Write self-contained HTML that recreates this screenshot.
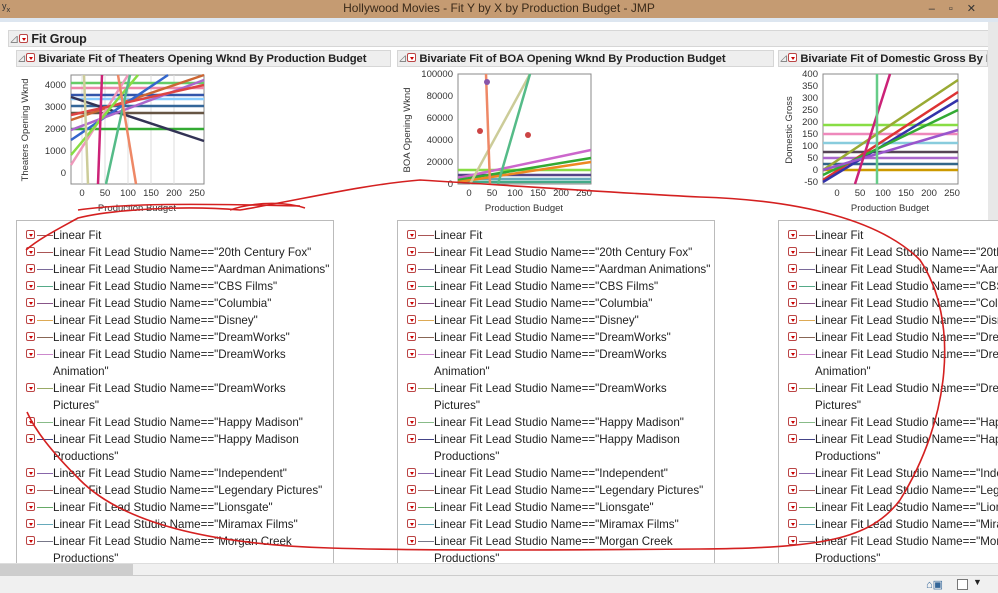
<!DOCTYPE html>
<html><head><meta charset="utf-8"><style>
*{margin:0;padding:0;box-sizing:border-box}
body{width:998px;height:593px;overflow:hidden;background:#fff;font-family:"Liberation Sans",sans-serif;position:relative;color:#222}
.abs{position:absolute}
.title{left:0;top:0;width:998px;height:18px;background:#c59b72;font-size:12px;color:#3a2a1a;text-align:center;line-height:17px}
.hdr{background:#eeeeee;border:1px solid #d6d6d6;font-weight:bold;font-size:11.3px;line-height:16px;white-space:nowrap;overflow:hidden;letter-spacing:-0.1px}
.tri{display:inline-block;width:9px;height:9px;border:1px solid #b44;border-radius:2px;background:#fff;position:relative;vertical-align:0px;margin-right:3px}
.tri:after{content:"";position:absolute;left:1.5px;top:2.5px;border-left:2.5px solid transparent;border-right:2.5px solid transparent;border-top:3px solid #c00}
.box{border:1px solid #bbb;background:#fff;overflow:hidden}
.list{position:absolute;left:0;top:6px;font-size:11.6px;line-height:17px;white-space:nowrap}
.it{position:relative;padding-left:36px}
.it .tri{position:absolute;left:9px;top:3px}
.it i{position:absolute;left:20px;top:8px;width:16px;height:1px;background:#7a6a9a}
</style></head><body>
<div class="abs title">Hollywood Movies - Fit Y by X by Production Budget - JMP</div>
<div class="abs" style="left:2px;top:1px;font-size:9px;color:#333">y<sub>x</sub></div>
<div class="abs" style="right:8px;top:2px;font-size:11px;color:#333;letter-spacing:14px">–▫✕</div>
<div class="abs" style="left:0;top:18px;width:998px;height:4px;background:#dde6f0"></div>
<div class="abs hdr" style="left:8px;top:30px;width:985px;height:17px;font-size:12.5px"><span style="color:#888;font-weight:normal">⊿</span><span class="tri"></span>Fit Group</div>
<div class="abs hdr" style="left:16px;top:50px;width:375px;height:17px"><span style="color:#888;font-weight:normal">⊿</span><span class="tri"></span>Bivariate Fit of Theaters Opening Wknd By Production Budget</div>
<div class="abs hdr" style="left:397px;top:50px;width:377px;height:17px"><span style="color:#888;font-weight:normal">⊿</span><span class="tri"></span>Bivariate Fit of BOA Opening Wknd By Production Budget</div>
<div class="abs hdr" style="left:778px;top:50px;width:210px;height:17px"><span style="color:#888;font-weight:normal">⊿</span><span class="tri"></span>Bivariate Fit of Domestic Gross By Production Budget</div>
<div class="abs" style="left:988px;top:22px;width:10px;height:553px;background:#e8e8e8"></div>

<svg class="abs" style="left:18px;top:70px" width="200" height="145">
<text x="10" y="60" transform="rotate(-90 10 60)" text-anchor="middle" font-size="9.5" fill="#333" font-family="Liberation Sans">Theaters Opening Wknd</text>
<g font-size="9.5" fill="#333" font-family="Liberation Sans" text-anchor="end"><text x="48" y="18">4000</text><text x="48" y="40">3000</text><text x="48" y="62">2000</text><text x="48" y="84">1000</text><text x="48" y="106">0</text></g>
<rect x="53" y="5" width="133" height="109" fill="#fff" stroke="#888"/>
<g stroke="#ddd"><line x1="64" y1="5" x2="64" y2="114"/><line x1="87" y1="5" x2="87" y2="114"/><line x1="110" y1="5" x2="110" y2="114"/><line x1="133" y1="5" x2="133" y2="114"/><line x1="156" y1="5" x2="156" y2="114"/></g>
<g stroke-width="2.5" fill="none">
<line x1="53" y1="13" x2="186" y2="13" stroke="#6c6"/><line x1="53" y1="18" x2="186" y2="18" stroke="#e8a"/>
<line x1="53" y1="25" x2="186" y2="25" stroke="#35a"/><line x1="53" y1="29" x2="186" y2="29" stroke="#8cf"/>
<line x1="53" y1="36" x2="186" y2="36" stroke="#369"/><line x1="53" y1="43" x2="186" y2="43" stroke="#654"/>
<line x1="53" y1="59" x2="186" y2="59" stroke="#3a3"/>
<line x1="53" y1="27" x2="186" y2="71" stroke="#335"/>
<line x1="53" y1="50" x2="186" y2="5" stroke="#c63"/><line x1="53" y1="70" x2="150" y2="5" stroke="#36c"/>
<line x1="53" y1="60" x2="186" y2="10" stroke="#a6c"/><line x1="53" y1="95" x2="110" y2="5" stroke="#e9b"/>
<line x1="53" y1="45" x2="186" y2="15" stroke="#d44"/><line x1="53" y1="85" x2="120" y2="5" stroke="#8d4"/>
<line x1="80" y1="114" x2="84" y2="5" stroke="#c27"/><line x1="88" y1="114" x2="112" y2="5" stroke="#5b8"/>
<line x1="100" y1="5" x2="118" y2="114" stroke="#e86"/><line x1="70" y1="114" x2="66" y2="5" stroke="#cc9"/>
</g>
<g font-size="9.5" fill="#333" font-family="Liberation Sans" text-anchor="middle"><text x="64" y="126">0</text><text x="87" y="126">50</text><text x="110" y="126">100</text><text x="133" y="126">150</text><text x="156" y="126">200</text><text x="179" y="126">250</text><text x="119" y="141">Production Budget</text></g>
</svg>
<svg class="abs" style="left:400px;top:70px" width="200" height="145">
<text x="10" y="60" transform="rotate(-90 10 60)" text-anchor="middle" font-size="9.5" fill="#333" font-family="Liberation Sans">BOA Opening Wknd</text>
<g font-size="9.5" fill="#333" font-family="Liberation Sans" text-anchor="end"><text x="53" y="7">100000</text><text x="53" y="29">80000</text><text x="53" y="51">60000</text><text x="53" y="73">40000</text><text x="53" y="95">20000</text><text x="53" y="117">0</text></g>
<rect x="58" y="4" width="133" height="110" fill="#fff" stroke="#888"/>
<g stroke-width="2.5" fill="none">
<line x1="58" y1="100" x2="191" y2="100" stroke="#8d4"/><line x1="58" y1="105" x2="191" y2="105" stroke="#548"/>
<line x1="58" y1="109" x2="191" y2="109" stroke="#6ab"/><line x1="58" y1="112" x2="191" y2="112" stroke="#4a8"/>
<line x1="58" y1="108" x2="191" y2="80" stroke="#c6c"/><line x1="58" y1="110" x2="191" y2="88" stroke="#3a3"/>
<line x1="58" y1="112" x2="191" y2="92" stroke="#e82"/><line x1="70" y1="114" x2="130" y2="4" stroke="#cc9"/>
<line x1="98" y1="114" x2="130" y2="4" stroke="#5b8"/><line x1="86" y1="4" x2="90" y2="114" stroke="#e86"/>
</g>
<g fill="#c44"><circle cx="128" cy="65" r="3"/><circle cx="80" cy="61" r="3"/></g><circle cx="87" cy="12" r="3" fill="#85a"/>
<g font-size="9.5" fill="#333" font-family="Liberation Sans" text-anchor="middle"><text x="69" y="126">0</text><text x="92" y="126">50</text><text x="115" y="126">100</text><text x="138" y="126">150</text><text x="161" y="126">200</text><text x="184" y="126">250</text><text x="124" y="141">Production Budget</text></g>
</svg>
<svg class="abs" style="left:780px;top:70px" width="200" height="145">
<text x="12" y="60" transform="rotate(-90 12 60)" text-anchor="middle" font-size="9.5" fill="#333" font-family="Liberation Sans">Domestic Gross</text>
<g font-size="9.5" fill="#333" font-family="Liberation Sans" text-anchor="end"><text x="38" y="7">400</text><text x="38" y="19">350</text><text x="38" y="31">300</text><text x="38" y="43">250</text><text x="38" y="55">200</text><text x="38" y="67">150</text><text x="38" y="79">100</text><text x="38" y="91">50</text><text x="38" y="103">0</text><text x="38" y="115">-50</text></g>
<rect x="43" y="4" width="135" height="110" fill="#fff" stroke="#888"/>
<g stroke-width="2.5" fill="none">
<line x1="43" y1="55" x2="178" y2="55" stroke="#8d4"/><line x1="43" y1="64" x2="178" y2="64" stroke="#e8b"/>
<line x1="43" y1="73" x2="178" y2="73" stroke="#8cd"/><line x1="43" y1="82" x2="178" y2="82" stroke="#545"/>
<line x1="43" y1="88" x2="178" y2="88" stroke="#a6c"/><line x1="43" y1="94" x2="178" y2="94" stroke="#368"/>
<line x1="43" y1="100" x2="178" y2="100" stroke="#c90"/>
<line x1="43" y1="110" x2="178" y2="22" stroke="#d33"/><line x1="43" y1="112" x2="178" y2="30" stroke="#33a"/>
<line x1="43" y1="105" x2="178" y2="40" stroke="#3a3"/><line x1="43" y1="100" x2="178" y2="10" stroke="#9a3"/>
<line x1="43" y1="100" x2="178" y2="60" stroke="#95c"/><line x1="75" y1="114" x2="110" y2="4" stroke="#c27"/>
<line x1="97" y1="4" x2="97" y2="114" stroke="#6c8"/>
</g>
<g font-size="9.5" fill="#333" font-family="Liberation Sans" text-anchor="middle"><text x="57" y="126">0</text><text x="80" y="126">50</text><text x="103" y="126">100</text><text x="126" y="126">150</text><text x="149" y="126">200</text><text x="172" y="126">250</text><text x="110" y="141">Production Budget</text></g>
</svg>

<div class="abs box" style="left:16px;top:220px;width:318px;height:350px"><div class="list">
<div class="it"><span class="tri"></span><i style="background:#a55"></i>Linear Fit</div>
<div class="it"><span class="tri"></span><i style="background:#a55"></i>Linear Fit Lead Studio Name=="20th Century Fox"</div>
<div class="it"><span class="tri"></span><i></i>Linear Fit Lead Studio Name=="Aardman Animations"</div>
<div class="it"><span class="tri"></span><i style="background:#5a8"></i>Linear Fit Lead Studio Name=="CBS Films"</div>
<div class="it"><span class="tri"></span><i style="background:#858"></i>Linear Fit Lead Studio Name=="Columbia"</div>
<div class="it"><span class="tri"></span><i style="background:#da5"></i>Linear Fit Lead Studio Name=="Disney"</div>
<div class="it"><span class="tri"></span><i style="background:#865"></i>Linear Fit Lead Studio Name=="DreamWorks"</div>
<div class="it"><span class="tri"></span><i style="background:#c8c"></i>Linear Fit Lead Studio Name=="DreamWorks<br>Animation"</div>
<div class="it"><span class="tri"></span><i style="background:#9a6"></i>Linear Fit Lead Studio Name=="DreamWorks<br>Pictures"</div>
<div class="it"><span class="tri"></span><i style="background:#8b8"></i>Linear Fit Lead Studio Name=="Happy Madison"</div>
<div class="it"><span class="tri"></span><i style="background:#448"></i>Linear Fit Lead Studio Name=="Happy Madison<br>Productions"</div>
<div class="it"><span class="tri"></span><i style="background:#86a"></i>Linear Fit Lead Studio Name=="Independent"</div>
<div class="it"><span class="tri"></span><i style="background:#a66"></i>Linear Fit Lead Studio Name=="Legendary Pictures"</div>
<div class="it"><span class="tri"></span><i style="background:#6a6"></i>Linear Fit Lead Studio Name=="Lionsgate"</div>
<div class="it"><span class="tri"></span><i style="background:#6ab"></i>Linear Fit Lead Studio Name=="Miramax Films"</div>
<div class="it"><span class="tri"></span><i style="background:#778"></i>Linear Fit Lead Studio Name=="Morgan Creek<br>Productions"</div>
</div></div>
<div class="abs box" style="left:397px;top:220px;width:318px;height:350px"><div class="list">
<div class="it"><span class="tri"></span><i style="background:#a55"></i>Linear Fit</div>
<div class="it"><span class="tri"></span><i style="background:#a55"></i>Linear Fit Lead Studio Name=="20th Century Fox"</div>
<div class="it"><span class="tri"></span><i></i>Linear Fit Lead Studio Name=="Aardman Animations"</div>
<div class="it"><span class="tri"></span><i style="background:#5a8"></i>Linear Fit Lead Studio Name=="CBS Films"</div>
<div class="it"><span class="tri"></span><i style="background:#858"></i>Linear Fit Lead Studio Name=="Columbia"</div>
<div class="it"><span class="tri"></span><i style="background:#da5"></i>Linear Fit Lead Studio Name=="Disney"</div>
<div class="it"><span class="tri"></span><i style="background:#865"></i>Linear Fit Lead Studio Name=="DreamWorks"</div>
<div class="it"><span class="tri"></span><i style="background:#c8c"></i>Linear Fit Lead Studio Name=="DreamWorks<br>Animation"</div>
<div class="it"><span class="tri"></span><i style="background:#9a6"></i>Linear Fit Lead Studio Name=="DreamWorks<br>Pictures"</div>
<div class="it"><span class="tri"></span><i style="background:#8b8"></i>Linear Fit Lead Studio Name=="Happy Madison"</div>
<div class="it"><span class="tri"></span><i style="background:#448"></i>Linear Fit Lead Studio Name=="Happy Madison<br>Productions"</div>
<div class="it"><span class="tri"></span><i style="background:#86a"></i>Linear Fit Lead Studio Name=="Independent"</div>
<div class="it"><span class="tri"></span><i style="background:#a66"></i>Linear Fit Lead Studio Name=="Legendary Pictures"</div>
<div class="it"><span class="tri"></span><i style="background:#6a6"></i>Linear Fit Lead Studio Name=="Lionsgate"</div>
<div class="it"><span class="tri"></span><i style="background:#6ab"></i>Linear Fit Lead Studio Name=="Miramax Films"</div>
<div class="it"><span class="tri"></span><i style="background:#778"></i>Linear Fit Lead Studio Name=="Morgan Creek<br>Productions"</div>
</div></div>
<div class="abs box" style="left:778px;top:220px;width:230px;height:350px"><div class="list">
<div class="it"><span class="tri"></span><i style="background:#a55"></i>Linear Fit</div>
<div class="it"><span class="tri"></span><i style="background:#a55"></i>Linear Fit Lead Studio Name=="20th Century Fox"</div>
<div class="it"><span class="tri"></span><i></i>Linear Fit Lead Studio Name=="Aardman Animations"</div>
<div class="it"><span class="tri"></span><i style="background:#5a8"></i>Linear Fit Lead Studio Name=="CBS Films"</div>
<div class="it"><span class="tri"></span><i style="background:#858"></i>Linear Fit Lead Studio Name=="Columbia"</div>
<div class="it"><span class="tri"></span><i style="background:#da5"></i>Linear Fit Lead Studio Name=="Disney"</div>
<div class="it"><span class="tri"></span><i style="background:#865"></i>Linear Fit Lead Studio Name=="DreamWorks"</div>
<div class="it"><span class="tri"></span><i style="background:#c8c"></i>Linear Fit Lead Studio Name=="DreamWorks<br>Animation"</div>
<div class="it"><span class="tri"></span><i style="background:#9a6"></i>Linear Fit Lead Studio Name=="DreamWorks<br>Pictures"</div>
<div class="it"><span class="tri"></span><i style="background:#8b8"></i>Linear Fit Lead Studio Name=="Happy Madison"</div>
<div class="it"><span class="tri"></span><i style="background:#448"></i>Linear Fit Lead Studio Name=="Happy Madison<br>Productions"</div>
<div class="it"><span class="tri"></span><i style="background:#86a"></i>Linear Fit Lead Studio Name=="Independent"</div>
<div class="it"><span class="tri"></span><i style="background:#a66"></i>Linear Fit Lead Studio Name=="Legendary Pictures"</div>
<div class="it"><span class="tri"></span><i style="background:#6a6"></i>Linear Fit Lead Studio Name=="Lionsgate"</div>
<div class="it"><span class="tri"></span><i style="background:#6ab"></i>Linear Fit Lead Studio Name=="Miramax Films"</div>
<div class="it"><span class="tri"></span><i style="background:#778"></i>Linear Fit Lead Studio Name=="Morgan Creek<br>Productions"</div>
</div></div>

<div class="abs" style="left:0;top:563px;width:998px;height:12px;background:#f0f0f0;border-top:1px solid #ddd"></div>
<div class="abs" style="left:0;top:564px;width:133px;height:11px;background:#cdcdcd"></div>
<div class="abs" style="left:0;top:575px;width:998px;height:18px;background:#f0f0f0;border-top:1px solid #ccc"></div>
<div class="abs" style="left:926px;top:578px;font-size:11px;color:#369">⌂▣</div>
<div class="abs" style="left:957px;top:579px;width:11px;height:11px;border:1px solid #777;background:#fff"></div>
<div class="abs" style="left:973px;top:577px;font-size:9px">▼</div>

<svg class="abs" style="left:0;top:0" width="998" height="593" fill="none" stroke="#d42020" stroke-width="1.6">
<path d="M230 210 C260 200 290 203 305 208"/>
<path d="M78 210 C120 204 180 203 300 206"/>
<path d="M26 250 C40 238 60 228 78 218 C110 210 180 205 240 210 C300 200 360 185 420 180 C520 186 600 192 700 197 C800 200 880 220 920 260 C960 320 950 420 900 500 C870 540 820 548 700 549 C560 550 420 551 330 548 C200 544 120 520 80 480 C50 450 35 430 27 412"/>
</svg>
</body></html>
